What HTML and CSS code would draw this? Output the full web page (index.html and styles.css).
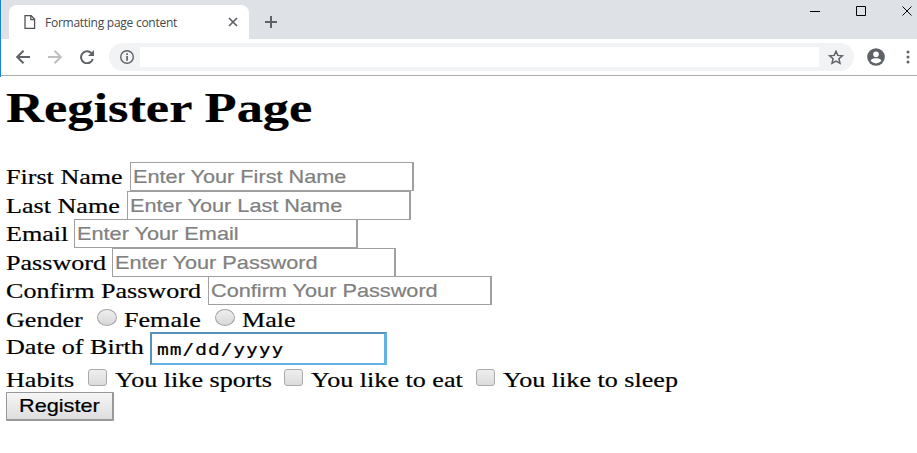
FILE: index.html
```html
<!DOCTYPE html>
<html lang="en">
<head>
<meta charset="utf-8">
<title>Formatting page content</title>
<link rel="stylesheet" href="styles.css">
</head>
<body>
<header class="browser">
  <div class="tabs">
    <div class="tab">
      <svg class="doc" width="12" height="16" viewBox="0 0 12 16" fill="none" stroke="#505357" stroke-width="1.3"><path d="M1 1.7h6.2l3.400 3.600v9H1z"/><path d="M6.800 1.700v4h3.800"/></svg>
      <span class="title">Formatting page content</span>
      <svg width="10" height="10" viewBox="0 0 10 10" stroke="#5f6368" stroke-width="1.7"><path d="M1 1l8 8M9 1l-8 8"/></svg>
    </div>
    <svg class="plus" width="12" height="12" viewBox="0 0 12 12" stroke="#5f6368" stroke-width="2"><path d="M6 0v12M0 6h12"/></svg>
    <svg class="window" width="107" height="12" viewBox="0 0 107 12" fill="none" stroke="#000"><path d="M0 6.5h10M46.500 1.500h9v9h-9zM92.500 1.500l9 9M101.500 1.500l-9 9"/></svg>
  </div>
  <div class="toolbar">
    <svg width="14" height="14" viewBox="0 0 14 14" fill="none" stroke="#5f6368" stroke-width="2"><path d="M14 7H1.500M7.500 .7L1.200 7l6.300 6.300"/></svg>
    <svg width="14" height="14" viewBox="0 0 14 14" fill="none" stroke="#bdbfc1" stroke-width="2"><path d="M0 7h12.500M6.500 .7L12.800 7l-6.300 6.300"/></svg>
    <svg width="14" height="14" viewBox="0 0 14 14"><path d="M11.500 3.200A6 6 0 1 0 12.800 9" fill="none" stroke="#5f6368" stroke-width="2"/><path d="M14 0v6H8z" fill="#5f6368"/></svg>
    <div class="omnibox">
      <svg width="14" height="14" viewBox="0 0 14 14"><circle cx="7" cy="7" r="6.300" fill="none" stroke="#5f6368" stroke-width="1.400"/><path d="M6.200 3.200h1.700v1.700H6.200zM6.200 6.100h1.700v4.700H6.200z" fill="#5f6368"/></svg>
      <div class="url"></div>
      <svg width="16" height="15" viewBox="0 0 16 15" fill="none" stroke="#5f6368" stroke-width="1.500"><path d="M8 1.300l1.800 4.100 4.600.4-3.500 3 1.100 4.500L8 11l-4 2.300 1.100-4.500-3.500-3 4.600-.4z"/></svg>
    </div>
    <svg class="user" width="18" height="18" viewBox="0 0 18 18"><circle cx="9" cy="9" r="8.800" fill="#5f6368"/><circle cx="9" cy="6.200" r="2.800" fill="#fff"/><path d="M3.600 12.500C4.500 10.700 7 10.200 9 10.200s4.500.5 5.400 2.300a6.500 6.500 0 0 1-10.800 0z" fill="#fff"/></svg>
    <svg class="more" width="4" height="14" viewBox="0 0 4 14" fill="#5f6368"><circle cx="2" cy="2" r="1.500"/><circle cx="2" cy="7" r="1.500"/><circle cx="2" cy="12" r="1.500"/></svg>
  </div>
</header>
<main class="page">
  <h1><span class="wide">Register Page</span></h1>
  <form>
    <div class="row"><label class="first"><span class="wide">First Name</span></label><div class="field"><span class="wide">Enter Your First Name</span></div></div>
    <div class="row"><label class="last"><span class="wide">Last Name</span></label><div class="field"><span class="wide">Enter Your Last Name</span></div></div>
    <div class="row"><label class="email"><span class="wide">Email</span></label><div class="field"><span class="wide">Enter Your Email</span></div></div>
    <div class="row"><label class="password"><span class="wide">Password</span></label><div class="field"><span class="wide">Enter Your Password</span></div></div>
    <div class="row"><label class="confirm"><span class="wide">Confirm Password</span></label><div class="field"><span class="wide">Confirm Your Password</span></div></div>
    <div class="row gender"><label class="gender-label"><span class="wide">Gender</span></label><i class="radio"></i><label class="female"><span class="wide">Female</span></label><i class="radio"></i><label><span class="wide">Male</span></label></div>
    <div class="row birth"><label class="birth-label"><span class="wide">Date of Birth</span></label><div class="date"><span class="wide">mm/dd/yyyy</span></div></div>
    <div class="row habits"><label class="habits-label"><span class="wide">Habits</span></label><i class="check"></i><label class="sports"><span class="wide">You like sports</span></label><i class="check"></i><label class="eat"><span class="wide">You like to eat</span></label><i class="check"></i><label><span class="wide">You like to sleep</span></label></div>
    <button type="button"><span class="wide">Register</span></button>
  </form>
</main>
</body>
</html>
```
FILE: styles.css
```css
* { box-sizing: border-box; }
body { margin: 0; width: 917px; height: 453px; overflow: hidden; background: #fff; color: #000; font-family: "Liberation Serif", serif; }
svg { display: block; flex: none; }
.browser { height: 77px; border-left: 1px solid #1883d7; }
.tabs { height: 39px; background: #dee1e6; display: flex; padding-left: 8px; }
.tab { width: 240px; height: 34px; margin-top: 5px; padding: 0 11px 0 15px; border-radius: 8px 8px 0 0; background: #fff; display: flex; align-items: center; }
.doc { margin-right: 9px; }
.title { flex: 1; font: 12px "Open Sans", sans-serif; letter-spacing: -0.26px; color: #45484c; white-space: nowrap; }
.plus { margin: 16px 0 0 16px; }
.window { margin: 5px 0 0 auto; }
.toolbar { height: 37px; display: flex; align-items: center; gap: 18px; padding-left: 15px; border-bottom: 1px solid #acacac; }
.omnibox { width: 745px; height: 28px; margin-left: -3px; padding: 0 10px 0 11px; border-radius: 14px; background: #f1f3f4; display: flex; align-items: center; }
.url { flex: 1; height: 20px; margin: 0 9px 0 6px; background: #fff; }
.user { margin-left: -5px; }
.more { margin-left: 3px; }

.page { padding-left: 6px; }
.wide { display: inline-block; white-space: nowrap; transform: scaleX(1.22); transform-origin: 0 50%; -webkit-text-stroke: 0.2px; }
h1 { margin: 0; height: 85px; font-size: 43px; line-height: 62px; }
.row { height: 28.6px; display: flex; font-size: 21.4px; line-height: 30px; }
label { flex: none; }
.first { width: 124px; }
.last { width: 121px; }
.email { width: 68px; }
.password { width: 106px; }
.confirm { width: 202px; }
.field { width: 284px; height: 29px; border: 1px solid #a0a0a0; border-right-width: 2px; padding-left: 2px; color: #808080; font: 17.8px/29px "Liberation Sans", sans-serif; }
.gender { height: 27px; line-height: 31px; }
.gender-label { width: 91px; }
.female { width: 91px; }
.radio { flex: none; width: 20px; height: 17px; margin: 4px 7px 0 0; border: 1px solid #a3a3a3; border-radius: 50%; background: linear-gradient(#eee, #d8d8d8); }
.birth { height: 33px; line-height: 31px; }
.birth-label { width: 144px; }
.date { width: 237px; height: 33px; border: 2px solid #63b3e4; border-top-color: #5792bb; border-left-color: #5792bb; border-right-width: 3px; padding-left: 5px; font: 16px/32px "DejaVu Sans Mono", monospace; letter-spacing: 0.8px; }
.habits { height: 27px; line-height: 31px; }
.habits-label { width: 82px; }
.check { flex: none; width: 19px; height: 17px; margin: 4px 8px 0 0; border: 1px solid #aaa; border-radius: 3px; background: linear-gradient(#eee, #dcdcdc); }
.sports { width: 169px; }
.eat { width: 165px; }
button { display: block; width: 108px; height: 29px; margin: 0; padding: 0 0 0 12px; border: 1px solid #999; border-right-width: 2px; border-bottom-width: 2px; border-radius: 1px; background: linear-gradient(#f6f6f6, #dedede); color: #000; font: 17.8px/27px "Liberation Sans", sans-serif; text-align: left; }
```
